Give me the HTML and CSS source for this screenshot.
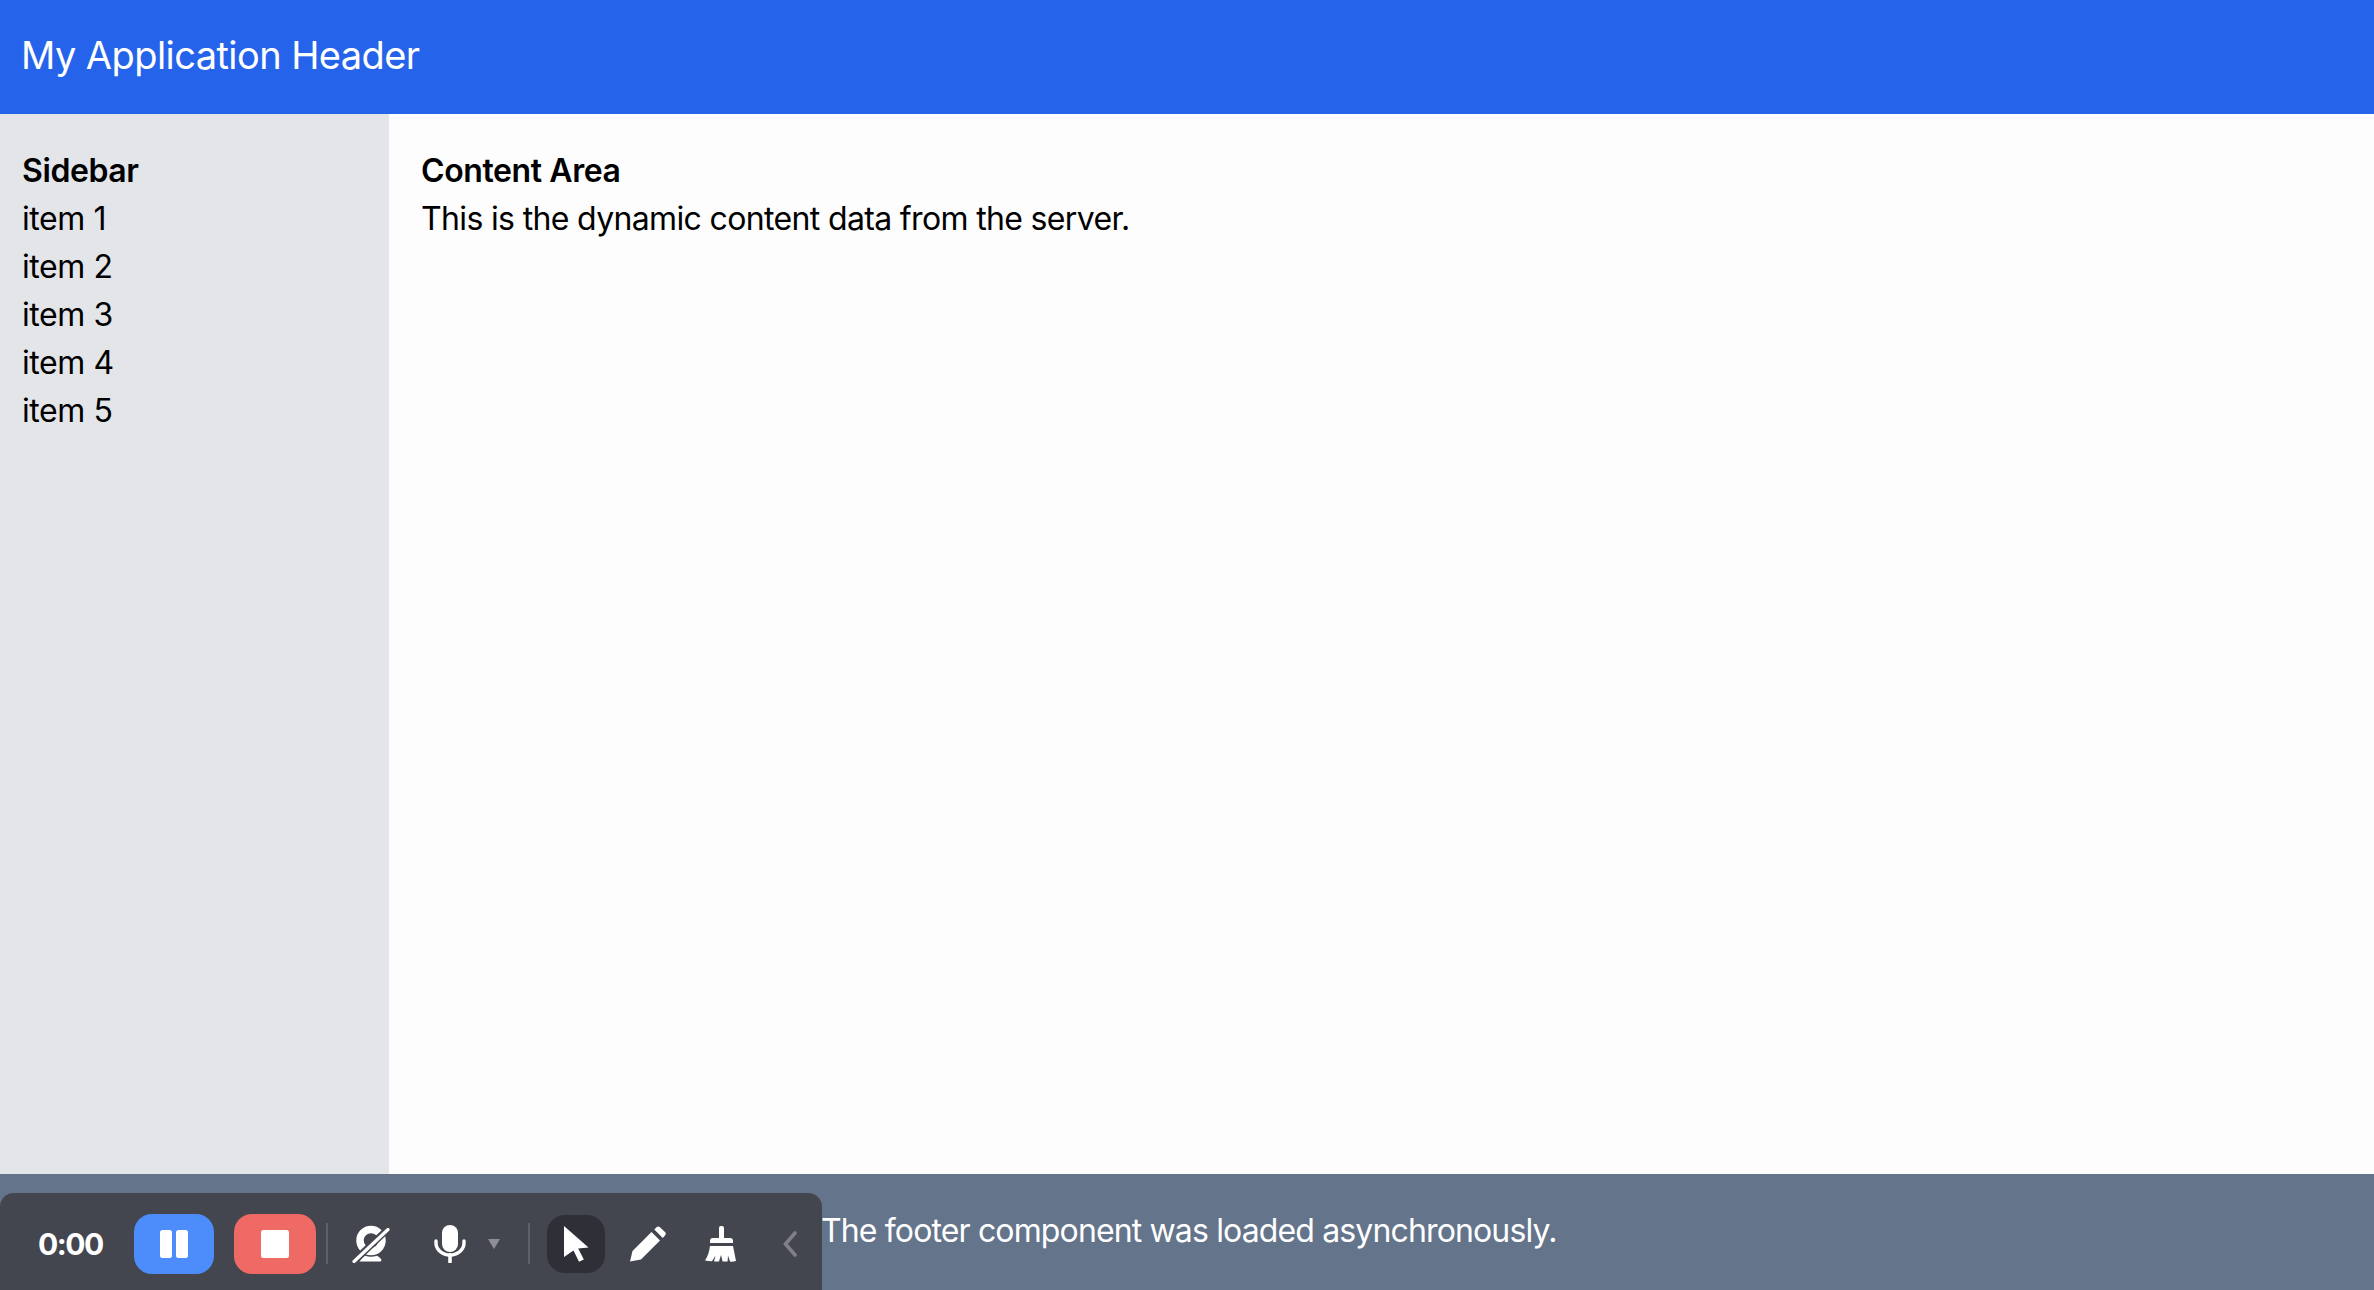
FILE: index.html
```html
<!DOCTYPE html>
<html lang="en">
<head>
<meta charset="utf-8">
<title>My Application</title>
<link rel="stylesheet" href="styles.css">
</head>
<body>
<div class="app">
  <header class="header">My Application Header</header>
  <div class="middle">
    <aside class="sidebar">
      <div class="title">Sidebar</div>
      <div>item 1</div>
      <div>item 2</div>
      <div>item 3</div>
      <div>item 4</div>
      <div>item 5</div>
    </aside>
    <main class="content">
      <div class="title">Content Area</div>
      <div class="body-text">This is the dynamic content data from the server.</div>
    </main>
  </div>
  <footer class="footer">The footer component was loaded asynchronously.</footer>
</div>
<div class="toolbar">
  <span class="time">0:00</span>
  <button class="btn btn-pause" aria-label="Pause">
    <svg width="28" height="28" viewBox="0 0 28 28"><rect x="0" y="0" width="12" height="28" rx="2.5" fill="#fff"/><rect x="16" y="0" width="12" height="28" rx="2.5" fill="#fff"/></svg>
  </button>
  <button class="btn btn-stop" aria-label="Stop">
    <svg width="28" height="28" viewBox="0 0 28 28"><rect width="28" height="28" rx="2.5" fill="#fff"/></svg>
  </button>
  <span class="divider div-a"></span>
  <svg class="icon eye" width="38" height="38" viewBox="0 0 38 38" aria-label="Camera off">
    <circle cx="19" cy="15.500" r="11" fill="none" stroke="#fff" stroke-width="7.500"/>
    <path d="M9 36.500h19a1.500 1.500 0 0 0 .8-2.700 16 16 0 0 0-3.800-3q-6 1.800-12 0a16 16 0 0 0-5.500 5.700Z" fill="#fff"/>
    <path d="M23.500 12 24 19l-5 2Z" fill="#fff"/>
    <path d="M0 38 37 3" stroke="#44464f" stroke-width="7"/>
    <path d="M2 36.500 36 4.500" stroke="#fff" stroke-width="3.200" stroke-linecap="round"/>
  </svg>
  <svg class="icon mic" width="32" height="38" viewBox="0 0 32 38" aria-label="Microphone">
    <rect x="8" y="0" width="16" height="27" rx="8" fill="#fff"/>
    <path d="M2 16v2a14 12 0 0 0 28 0v-2" fill="none" stroke="#fff" stroke-width="3.400" stroke-linecap="round"/>
    <path d="M16 30v7" stroke="#fff" stroke-width="3.600" stroke-linecap="round"/>
  </svg>
  <svg class="icon caret" width="12" height="10" viewBox="0 0 12 10"><path d="M0 0h12L6 10Z" fill="#8d8e96"/></svg>
  <span class="divider div-b"></span>
  <button class="btn btn-cursor" aria-label="Select">
    <svg width="26" height="36" viewBox="0 0 26 36"><path d="M1 0 25.500 21.500 15.200 22.500 20.800 33.500 16 35.800 10.500 24.500 1 31Z" fill="#fff"/></svg>
  </button>
  <svg class="icon pencil" width="36" height="36" viewBox="0 0 36 36" aria-label="Pencil">
    <path d="M0 35.500 2.500 25 21.500 6 30 14.500 11 33.500Z" fill="#fff"/>
    <path d="M24.300 3.500 26.500 1.300a2.500 2.500 0 0 1 3.400 0L35 6.100a2.500 2.500 0 0 1 0 3.400L32.800 12Z" fill="#fff"/>
  </svg>
  <svg class="icon broom" width="32" height="36" viewBox="0 0 32 36" aria-label="Clear">
    <rect x="14" y="0" width="5" height="14" rx="2" fill="#fff"/>
    <path d="M8 12h17a3 3 0 0 1 3 3v2H5v-2a3 3 0 0 1 3-3Z" fill="#fff"/>
    <path d="M5 20h23l3 15q-3 .8-6 .6l-2-6-.4 6h-5l-1.600-6.500-2 6.500H9l1.500-6-3.500 5.600q-3.500 0-7-.6 4-6 5-14.600Z" fill="#fff"/>
  </svg>
  <svg class="icon chevron" width="14" height="26" viewBox="0 0 14 26"><path d="M12 2 2.500 13 12 24" fill="none" stroke="#7e7f88" stroke-width="3.600" stroke-linecap="round"/></svg>
</div>
</body>
</html>
```

FILE: styles.css
```css
* { box-sizing: border-box; }
html, body { margin: 0; height: 100%; }
body {
  font-family: Inter, "Noto Sans", sans-serif;
  font-size: 32px;
  line-height: 48px;
  letter-spacing: -0.4px;
  color: #000;
  background: #fdfdfd;
  overflow: hidden;
}
.app {
  height: 100vh;
  display: flex;
  flex-direction: column;
}
.header {
  height: 114px;
  flex: none;
  display: flex;
  align-items: center;
  padding: 0 21px 5px;
  background: #2563eb;
  color: #fff;
  font-size: 38px;
  letter-spacing: -0.57px;
}
.middle {
  flex: 1;
  display: flex;
  min-height: 0;
}
.sidebar {
  width: 389px;
  flex: none;
  padding: 33px 22px;
  background: #e3e5e9;
}
.content {
  flex: 1;
  padding: 33px 32px;
  background: #fdfdfd;
}
.title { font-weight: 600; }
.body-text { letter-spacing: -0.65px; }
.footer {
  height: 116px;
  flex: none;
  padding: 33px 0 0 821px;
  background: #64748b;
  color: #fff;
  letter-spacing: -0.86px;
}
.toolbar {
  position: absolute;
  left: 0;
  bottom: 0;
  width: 822px;
  height: 97px;
  display: flex;
  align-items: center;
  padding: 4px 0 0 38px;
  background: #44464f;
  border-top-left-radius: 14px;
  border-top-right-radius: 14px;
  color: #fff;
}
.time {
  width: 96px;
  flex: none;
  font-size: 30px;
  font-weight: 700;
  line-height: 40px;
  letter-spacing: -1.5px;
}
.btn {
  flex: none;
  height: 60px;
  padding: 0;
  border: 0;
  border-radius: 18px;
  display: flex;
  align-items: center;
  justify-content: center;
}
.btn-pause { width: 80px; background: #4d8dfb; }
.btn-stop { width: 82px; margin-left: 20px; background: #ef6a65; }
.btn-cursor { width: 58px; height: 58px; margin-left: 17px; background: #2f3037; }
.divider {
  flex: none;
  width: 2px;
  height: 41px;
  background: #5f6069;
}
.div-a { margin-left: 10px; }
.div-b { margin-left: 28px; }
.icon { flex: none; display: block; }
.eye { margin-left: 24px; }
.mic { margin-left: 44px; }
.caret { margin-left: 22px; }
.pencil { margin-left: 25px; }
.broom { margin-left: 39px; }
.chevron { margin-left: 46px; }
```
